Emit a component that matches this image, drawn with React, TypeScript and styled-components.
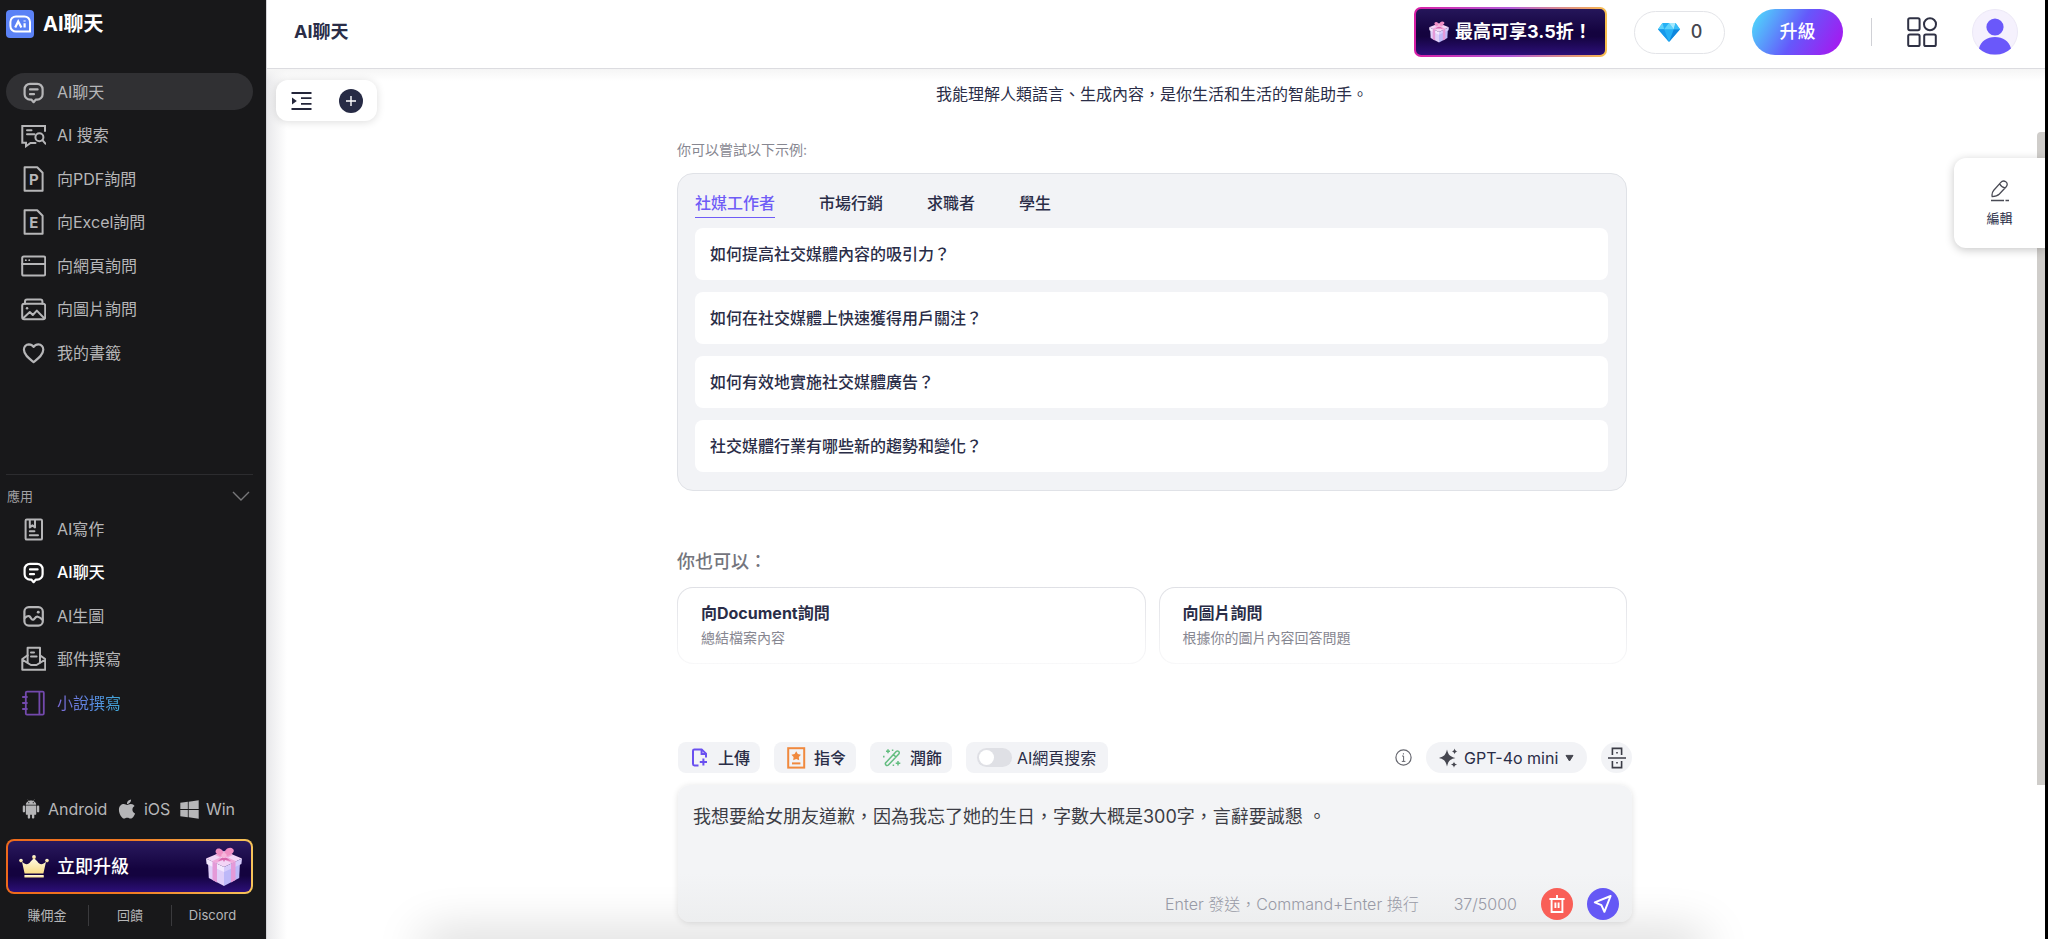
import React, { useState } from "react";
import styled, { createGlobalStyle, css } from "styled-components";
import { AiFillAndroid } from "react-icons/ai";
import { FaApple, FaWindows } from "react-icons/fa";

const GlobalStyle = createGlobalStyle`
  * { box-sizing: border-box; }
  body {
    margin: 0;
    background: #fff;
    color: #2a2d47;
    font-family: Inter, "Noto Sans CJK TC", sans-serif;
    font-size: 16px;
    line-height: 24px;
  }
  button, input, select, textarea { font: inherit; color: inherit; }
  button { border: 0; padding: 0; background: none; cursor: pointer; }
  a { color: inherit; text-decoration: none; }
  h1, h2, p, ul { margin: 0; padding: 0; list-style: none; }
  svg { display: block; flex: none; }
`;

/* ---------- shell ---------- */

const Shell = styled.div`
  display: grid;
  grid-template-columns: 266px minmax(0, 1fr);
  min-height: 100vh;
  border-right: 3px solid #000;
`;

const Sidebar = styled.aside`
  display: flex;
  flex-direction: column;
  padding: 10px 13px 13px 6px;
  background: #18181a;
  color: #b6b6b8;
`;

const Main = styled.main`
  position: relative;
  display: flex;
  flex-direction: column;
  border-left: 1px solid #d4d4d8;
`;

/* ---------- sidebar ---------- */

const Brand = styled.a`
  display: flex;
  align-items: center;
  gap: 9px;
  height: 28px;
  color: #fff;
  font-size: 20px;
  font-weight: 700;
`;

const NavList = styled.ul<{ $height: number }>`
  display: flex;
  flex-direction: column;
  justify-content: space-between;
  height: ${(p) => p.$height}px;
`;

const PrimaryNav = styled.nav`
  margin-top: 35px;
`;

const NavLink = styled.a<{ $active?: boolean; $bright?: boolean }>`
  display: flex;
  align-items: center;
  gap: 11px;
  height: 37px;
  padding-left: 14px;
  border-radius: 19px;
  ${(p) => p.$active && css`background: #303033;`}
  ${(p) => p.$bright && css`color: #fff; font-weight: 500;`}
`;

const GradientLabel = styled.span`
  background: linear-gradient(90deg, #7d6bd8, #5b86e0 50%, #3fa9d8);
  background-clip: text;
  color: transparent;
`;

const AppsNav = styled.nav`
  margin-top: 103px;
  border-top: 1px solid #2c2c2f;
`;

const AppsToggle = styled.button`
  display: flex;
  align-items: center;
  justify-content: space-between;
  width: 100%;
  height: 20px;
  margin: 11px 0 4px;
  padding: 0 3px 0 1px;
  color: #a2a2a5;
  font-size: 13px;
`;

const SidebarFooter = styled.div`
  margin-top: auto;
`;

const Platforms = styled.div`
  display: flex;
  justify-content: space-between;
  padding: 0 18px 0 14px;
`;

const PlatformLink = styled.a`
  display: flex;
  align-items: center;
  gap: 6px;
`;

const UpgradeBanner = styled.button`
  display: flex;
  align-items: center;
  gap: 8px;
  width: 100%;
  height: 55px;
  margin: 18px 0 11px;
  padding: 0 7px 0 11px;
  border: 2px solid transparent;
  border-radius: 8px;
  background:
    linear-gradient(180deg, #2a1a5e, #14033f 55%, #14033f 68%, #2c0f78) padding-box,
    linear-gradient(90deg, #ee6a1c, #f07a22 50%, #f6c45a) border-box;
  color: #fff;
  font-size: 18px;
  font-weight: 500;
  & > svg:last-child { margin-left: auto; }
`;

const FooterLinks = styled.div`
  display: grid;
  grid-template-columns: 82px 83px 1fr;
  font-size: 13px;
  line-height: 21px;
  text-align: center;
  a + a { border-left: 1px solid #3a3a3d; }
`;

/* ---------- header ---------- */

const Header = styled.header`
  display: flex;
  align-items: center;
  justify-content: space-between;
  height: 69px;
  padding: 0 27px 4px;
  border-bottom: 1px solid #dcdce0;
`;

const PageTitle = styled.h1`
  font-size: 18px;
  line-height: 26px;
  font-weight: 700;
`;

const HeaderActions = styled.div`
  display: flex;
  align-items: center;
  font-size: 18px;
  font-weight: 500;
`;

const PromoButton = styled.button`
  display: flex;
  align-items: center;
  gap: 5px;
  width: 193px;
  height: 50px;
  padding: 0 0 0 12px;
  border: 2px solid transparent;
  border-radius: 7px;
  background:
    linear-gradient(180deg, #25165a, #14033f 50%, #14033f 60%, #2c0f78) padding-box,
    linear-gradient(90deg, #d81ea4, #b45ad8 50%, #f0a860 92%, #f8c04c) border-box;
  color: #fff;
  font-weight: 700;
  white-space: nowrap;
`;

const GemPill = styled.button`
  display: flex;
  align-items: center;
  justify-content: center;
  gap: 10px;
  width: 91px;
  height: 43px;
  margin-left: 27px;
  border: 1px solid #e3e4e8;
  border-radius: 22px;
  color: #45474f;
  font-weight: 500;
`;

const UpgradePill = styled.button`
  width: 91px;
  height: 46px;
  margin-left: 27px;
  border-radius: 23px;
  background: linear-gradient(120deg, #4fd6fb 5%, #6558fb 50%, #a31bf0 92%);
  color: #fff;
  font-weight: 500;
`;

const Separator = styled.span`
  width: 1px;
  height: 28px;
  margin: 0 35px 0 28px;
  background: #d0d1d6;
`;

const AvatarButton = styled.button`
  margin-left: 35px;
`;

/* ---------- floating pieces ---------- */

const FloatingTools = styled.div`
  position: absolute;
  top: 80px;
  left: 9px;
  display: flex;
  align-items: center;
  justify-content: space-between;
  width: 101px;
  height: 41px;
  padding: 0 14px 0 15px;
  border-radius: 12px;
  background: #fff;
  box-shadow: 0 1px 8px rgba(0, 0, 0, 0.14);
`;

const ScrollThumb = styled.span`
  position: absolute;
  top: 132px;
  right: 0;
  width: 8px;
  height: 653px;
  border-radius: 4px 0 0 0;
  background: #cfcdca;
`;

const EditTab = styled.button`
  position: absolute;
  top: 158px;
  right: 0;
  display: flex;
  flex-direction: column;
  align-items: center;
  justify-content: center;
  gap: 6px;
  width: 91px;
  height: 90px;
  padding-top: 2px;
  border-radius: 12px 0 0 12px;
  background: #fff;
  box-shadow: 0 2px 10px rgba(0, 0, 0, 0.22);
  font-size: 13px;
  line-height: 20px;
`;

/* ---------- content ---------- */

const Content = styled.div`
  display: flex;
  flex: 1;
  flex-direction: column;
  padding: 13px 8px 0 0;
  background:
    linear-gradient(180deg, #f5f5f5, rgba(245, 245, 245, 0) 12px),
    linear-gradient(90deg, #e9e9eb, rgba(255, 255, 255, 0) 20px),
    #fff;
`;

const Column = styled.section`
  width: 100%;
  max-width: 950px;
  margin: 0 auto;
`;

const Intro = styled.p`
  text-align: center;
`;

const Caption = styled.p`
  margin: 33px 0 12px;
  color: #878791;
  font-size: 14px;
  line-height: 22px;
`;

const ExamplePanel = styled.div`
  display: flex;
  flex-direction: column;
  padding: 16px 18px 18px 17px;
  border: 1px solid #e0e2e7;
  border-radius: 16px;
  background: #f2f3f6;
  font-weight: 500;
`;

const Tabs = styled.div`
  display: flex;
  gap: 44px;
  height: 28px;
  margin-bottom: 10px;
`;

const Tab = styled.button<{ $selected: boolean }>`
  padding-bottom: 2px;
  border-bottom: 1px solid ${(p) => (p.$selected ? "#6f5cf6" : "transparent")};
  color: ${(p) => (p.$selected ? "#6f5cf6" : "inherit")};
`;

const Questions = styled.ul`
  display: grid;
  gap: 12px;
`;

const QuestionButton = styled.button`
  width: 100%;
  height: 52px;
  padding: 0 15px;
  border-radius: 8px;
  background: #fff;
  text-align: left;
`;

const SubHeading = styled.h2`
  margin: 58px 0 12px;
  color: #74757d;
  font-size: 18px;
  line-height: 26px;
  font-weight: 500;
`;

const Options = styled.div`
  display: grid;
  grid-template-columns: 1fr 1fr;
  gap: 13px;
`;

const OptionCard = styled.a`
  display: block;
  height: 77px;
  padding: 13px 23px;
  border-radius: 16px;
  border: 1px solid transparent;
  background:
    linear-gradient(#fff, #fff) padding-box,
    linear-gradient(180deg, #dfe0e5, #f8f8f9) border-box;
  strong { display: block; font-weight: 700; }
  span { display: block; margin-top: 2px; color: #878791; font-size: 14px; line-height: 22px; }
`;

/* ---------- composer ---------- */

const Dock = styled.footer`
  position: relative;
  overflow: hidden;
  flex: 1;
  display: flex;
  flex-direction: column;
  justify-content: flex-end;
  padding: 48px 0 17px 6px;
  &::after {
    content: "";
    position: absolute;
    bottom: -20px;
    left: 9%;
    right: 19%;
    height: 20px;
    border-radius: 20px;
    box-shadow: 0 0 48px 6px rgba(0, 0, 0, 0.18);
  }
`;

const Composer = styled.form`
  position: relative;
  z-index: 1;
  width: 100%;
  max-width: 954px;
  margin: 0 auto;
`;

const Toolbar = styled.div`
  display: flex;
  align-items: center;
  gap: 14px;
  margin-bottom: 12px;
`;

const chip = css`
  display: flex;
  align-items: center;
  height: 31px;
  border-radius: 8px;
  background: #f2f3f6;
`;

const ToolButton = styled.button`
  ${chip}
  gap: 6px;
  width: 82px;
  padding-left: 10px;
  font-weight: 500;
`;

const SwitchLabel = styled.label`
  ${chip}
  gap: 5px;
  padding: 0 12px 0 11px;
`;

const Switch = styled.input`
  appearance: none;
  display: flex;
  width: 35px;
  height: 19px;
  margin: 0;
  padding: 2px;
  border-radius: 10px;
  background: #dfe0e5;
  &::before {
    content: "";
    width: 15px;
    height: 15px;
    border-radius: 50%;
    background: #fff;
  }
  &:checked { justify-content: flex-end; background: #6558fb; }
`;

const InfoButton = styled.button`
  margin-left: auto;
`;

const ModelPicker = styled.label`
  ${chip}
  gap: 6px;
  padding: 0 13px;
  border-radius: 16px;
  select { border: 0; padding: 0; background: none; appearance: none; outline: 0; }
`;

const RoundChip = styled.button`
  ${chip}
  justify-content: center;
  width: 31px;
  border-radius: 50%;
`;

const InputPanel = styled.div`
  display: flex;
  flex-direction: column;
  height: 137px;
  border-radius: 12px;
  background: linear-gradient(180deg, #f3f4f6 65%, #edeeef);
  box-shadow: 0 1px 6px rgba(0, 0, 0, 0.12);
`;

const MessageInput = styled.textarea`
  flex: 1;
  width: 100%;
  padding: 18px 15px 0;
  border: 0;
  outline: 0;
  resize: none;
  background: none;
  color: #3c3d45;
  font-size: 18px;
  line-height: 28px;
`;

const InputFooter = styled.div`
  display: flex;
  align-items: center;
  justify-content: flex-end;
  padding: 0 13px 2px 0;
  color: #989aa6;
  font-weight: 300;
`;

const Counter = styled.span`
  margin: 0 24px 0 35px;
`;

const ActionButton = styled.button<{ $color: string }>`
  display: grid;
  place-items: center;
  width: 32px;
  height: 32px;
  border-radius: 50%;
  background: ${(p) => p.$color};
  & + & { margin-left: 14px; }
`;

/* ---------- icons ---------- */

const Glyph = ({ children, width = 2 }: { children: React.ReactNode; width?: number }) => (
  <svg width="26" height="26" viewBox="0 0 26 26" fill="none" stroke="currentColor" strokeWidth={width} strokeLinejoin="round" strokeLinecap="round" aria-hidden="true">
    {children}
  </svg>
);

const ChatIcon = () => (
  <Glyph width={2.2}>
    <path d="M10 4.8h7.2a5.4 5.4 0 0 1 5.4 5.4v5a5.4 5.4 0 0 1-5.4 5.4h-1.3l-2.3 2.6-2.3-2.6H10a5.4 5.4 0 0 1-5.4-5.4v-5A5.4 5.4 0 0 1 10 4.8z" />
    <path d="M10 10.4h7.6M10 15.2h4" />
  </Glyph>
);
const SearchIcon = () => (
  <Glyph>
    <path d="M25 9V4H2.3v16.8H6v3.4l4.5-3.2h5" strokeLinejoin="miter" />
    <path d="M7 8.2h4.5M7 12.2h7.5" />
    <circle cx="19.4" cy="15.2" r="4" />
    <path d="m22.4 18.2 3 3.4" />
  </Glyph>
);
const LetterDocIcon = ({ letter }: { letter: string }) => (
  <Glyph>
    <path d="M4.6 1.2h12.6l5.4 5.6v18H4.6z" />
    <text x="13.8" y="19.2" textAnchor="middle" fontSize="15" fontWeight="700" fill="currentColor" stroke="none">{letter}</text>
  </Glyph>
);
const WebIcon = () => (
  <Glyph>
    <rect x="2.2" y="3.4" width="23" height="19.2" rx="1.6" />
    <path d="M2.2 11h23" />
    <path d="M5.8 7.2h.1M9.2 7.2h.1" strokeWidth="1.8" />
  </Glyph>
);
const PicturesIcon = () => (
  <Glyph>
    <path d="M5 7.8V5.6a2 2 0 0 1 2-2h13.4a2 2 0 0 1 2 2v2.2" />
    <rect x="2.2" y="7.8" width="23" height="15.4" rx="2" />
    <path d="m3.4 22 6.4-6 3 3 4-4.4L24 22" />
    <path d="M7 12.2h.1" strokeWidth="2.4" />
  </Glyph>
);
const HeartIcon = () => (
  <Glyph width={2.2}>
    <path d="M8.8 4.4A5 5 0 0 0 3.9 9.6c0 5.4 5.4 9.2 9.7 12.5 4.3-3.3 9.7-7.1 9.7-12.5a5 5 0 0 0-4.9-5.2c-2 0-3.7.9-4.8 2.5-1.1-1.6-2.8-2.5-4.8-2.5z" />
  </Glyph>
);
const WritingIcon = () => (
  <Glyph>
    <rect x="5.6" y="3.6" width="16.4" height="20" rx="1.2" />
    <path d="M9.8 4v7.4l2.600-2 2.6 2V4M9.800 15.200h4.600M9.800 19.200h8.200" />
  </Glyph>
);
const PaintIcon = () => (
  <Glyph width={2.2}>
    <rect x="4.4" y="4.2" width="18.4" height="18.4" rx="4.4" />
    <path d="M4.8 15c3.6-3.4 5.2-1.8 6.2.2s2.6 2.2 4 0 3.600-2.200 7.400 1.400" />
    <path d="M18.2 9.200h.1" strokeWidth="2.8" />
  </Glyph>
);
const MailIcon = () => (
  <Glyph>
    <path d="M7.6 9.4 2.3 13v10.800h22.900V13L20 9.400M2.300 13.600l8.600 5.400h5.600l8.700-5.400" />
    <path d="M7.6 16.400V1.800H20v14.600M11 6.600h3M11 10.600h5.600" />
  </Glyph>
);
const NovelIcon = () => (
  <svg width="26" height="26" viewBox="0 0 26 26" fill="none" stroke="#7349ad" strokeWidth="1.8" aria-hidden="true">
    <rect x="5.8" y="1.6" width="18" height="23" rx="1.2" />
    <path d="M19.4 1.6v23M2.2 7h5.4M2.200 13h5.400M2.200 19h5.400" />
  </svg>
);
const LogoIcon = () => (
  <svg width="28" height="28" viewBox="0 0 28 28" fill="none" aria-hidden="true">
    <rect width="28" height="28" rx="4" fill="#5b82f6" />
    <path d="M10 6.400h8.400a5.600 5.600 0 0 1 5.600 5.600v9.600H10A5.600 5.600 0 0 1 4.400 16v-4A5.600 5.600 0 0 1 10 6.400z" stroke="#fff" strokeWidth="2" />
    <path d="m9.200 17.400 3-6 3.200 6M18.600 13.200v4.200M18.600 10.600v.8" stroke="#fff" strokeWidth="2.2" />
  </svg>
);
const CrownIcon = () => (
  <svg width="30" height="24" viewBox="0 0 30 24" aria-hidden="true">
    <defs>
      <linearGradient id="crown" x1="0" y1="0" x2="0" y2="1">
        <stop offset="0" stopColor="#fffbe6" /><stop offset="1" stopColor="#f8dc86" />
      </linearGradient>
    </defs>
    <g fill="url(#crown)">
      <path d="M3 6.800c3.400 3.400 6.400 3.200 8.600-.2L15 3l3.400 3.600c2.200 3.400 5.200 3.600 8.600.2l-2.600 11.600H5.600z" />
      <rect x="5.4" y="20" width="19.4" height="2.6" rx=".6" />
      <circle cx="2" cy="5.6" r="1.8" /><circle cx="15" cy="2" r="1.9" /><circle cx="28" cy="5.6" r="1.8" />
    </g>
  </svg>
);
const GiftIcon = ({ size }: { size: number }) => (
  <svg width={size} height={size} viewBox="0 0 40 40" aria-hidden="true">
    <path d="M4 15 20 22v17L4.800 31z" fill="#e0cff9" />
    <path d="M36 15 20 22v17l15.200-8z" fill="#bdb8f8" />
    <path d="M2 11.500 20 4l18 7.500L20 20z" fill="#f3d5f6" />
    <path d="M2 11.500 20 20v5L2.600 17z" fill="#f3e8fe" />
    <path d="M38 11.500 20 20v5l17.400-8z" fill="#d6cbfb" />
    <path d="m8.500 14.500 4.500 2.200v18.800l-4.500-2.400zM31.500 14.500 27 16.700v18.800l4.500-2.400z" fill="#e49ad8" />
    <path d="m11 8 17 8.300 4-2L15 6.200zM29 8l-17 8.300-4-2 17-8.100z" fill="#f0a8da" />
    <path d="M20 10c-5-1-10-4-8-7s8-1 8 5c0-6 6-9 9-6s-3 7-9 8z" fill="#f08fc4" />
    <path d="m20 9-6 5 5-1 1 2 1-2 6 1z" fill="#d765ac" />
    <circle cx="20" cy="8.5" r="2.6" fill="#f8b4da" />
  </svg>
);
const GemIcon = () => (
  <svg width="24" height="20" viewBox="0 0 24 20" aria-hidden="true">
    <path d="M5.500 1h13L23 7.200 12 20 1 7.200z" fill="#25b0f5" />
    <path d="M5.500 1 1 7.200h6.200zM12 1 7.200 7.200h9.600z" fill="#5cd2fb" />
    <path d="M18.500 1H12l4.800 6.200z" fill="#a5e9fd" />
    <path d="M1 7.200h6.200L12 20z" fill="#1798ea" />
    <path d="M23 7.200h-6.200L12 20z" fill="#0f86dd" />
    <path d="m18.500 1 4.500 6.200h-6.200z" fill="#37bdf7" />
  </svg>
);
const GridIcon = () => (
  <svg width="30" height="30" viewBox="0 0 30 30" fill="none" stroke="#2f3144" strokeWidth="2" aria-hidden="true">
    <rect x="1.2" y="1.2" width="11.4" height="12" rx="1.6" />
    <circle cx="23" cy="7.2" r="6" />
    <rect x="1.2" y="17.4" width="11.4" height="11.6" rx="1.6" />
    <rect x="17.2" y="17.4" width="11.6" height="11.6" rx="1.6" />
  </svg>
);
const AvatarIcon = () => (
  <svg width="46" height="46" viewBox="0 0 46 46" aria-hidden="true">
    <circle cx="23" cy="23" r="22.5" fill="#f5f1fd" stroke="#ece8f6" />
    <circle cx="23" cy="18" r="8.6" fill="#6a58fa" />
    <path d="M7 39.500C9 32 15 28 23 28s14 4 16 11.500A22.500 22.500 0 0 1 23 45.500 22.500 22.500 0 0 1 7 39.500z" fill="#6a58fa" />
  </svg>
);
const IndentIcon = () => (
  <svg width="21" height="20" viewBox="0 0 21 20" fill="none" stroke="#24263a" strokeWidth="1.8" aria-hidden="true">
    <path d="M.5 2h20M10 7.200h10.500M10 12.800h10.500M.5 18h20" />
    <path d="M1 6.600 5.800 10 1 13.400z" fill="#24263a" stroke="none" />
  </svg>
);
const PlusIcon = () => (
  <svg width="24" height="24" viewBox="0 0 24 24" aria-hidden="true">
    <circle cx="12" cy="12" r="12" fill="#272b45" />
    <path d="M12 7v10M7 12h10" stroke="#fff" strokeWidth="1.4" />
  </svg>
);
const PencilIcon = () => (
  <svg width="20" height="22" viewBox="0 0 20 22" fill="none" stroke="#4a4b55" strokeWidth="1.3" strokeLinejoin="round" aria-hidden="true">
    <path d="M2.200 16.600c-.6-2.600.2-4.600 1.600-6.400l6.800-7.600c1.400-1.600 3.400-2 5.200-.8s1.800 3.400.4 5L9.400 14c-1.800 1.800-4.200 2.600-7.200 2.600zM9.600 3.800c1.200 2.400 2.800 3.600 5.400 4.200" />
    <path d="M1 20.600h13M15.500 20.600h3.500" strokeWidth="1.5" />
  </svg>
);
const ChevronIcon = () => (
  <svg width="18" height="10" viewBox="0 0 18 10" fill="none" stroke="#77777a" strokeWidth="1.4" aria-hidden="true">
    <path d="m1 1 8 8 8-8" />
  </svg>
);
const UploadIcon = () => (
  <svg width="24" height="22" viewBox="0 0 24 22" fill="none" stroke="#6a50f0" strokeWidth="2" aria-hidden="true">
    <path d="M10.500 18.400H6.400a1.400 1.400 0 0 1-1.400-1.400V3.800a1.400 1.400 0 0 1 1.400-1.400h7.200l4.400 4.200v4" />
    <path d="M13.600 2.600V7H18M15.400 11.400v7.200M11.800 15h7.200" />
  </svg>
);
const CommandIcon = () => (
  <svg width="24" height="22" viewBox="0 0 24 22" fill="none" stroke="#f0893e" strokeWidth="2" aria-hidden="true">
    <rect x="4.2" y="1.2" width="16" height="19.4" />
    <path d="m12.200 4.200 1.600 2.900 3.200.6-2.200 2.400.4 3.200-3-1.400-3 1.400.4-3.200-2.200-2.400 3.200-.6z" fill="#f0893e" stroke="none" />
    <path d="M8 16.400h8.400" />
  </svg>
);
const PolishIcon = () => (
  <svg width="24" height="22" viewBox="0 0 24 22" fill="none" stroke="#63bd80" strokeWidth="1.5" strokeLinejoin="round" aria-hidden="true">
    <path d="M6 15.400 16.200 4.600a1.700 1.700 0 0 1 2.600 2.400L8.400 18a1.700 1.700 0 0 1-2.400-2.600zM13.400 7.600l2.600 2.400" />
    <path d="M8 2.200v4M6 4.200h4M18 14v4.600M15.700 16.300h4.600M3.800 8.800v1.600M12.600 2.600v1.400M13.400 17.600v1.400" />
  </svg>
);
const InfoIcon = () => (
  <svg width="17" height="17" viewBox="0 0 17 17" fill="none" stroke="#66676f" strokeWidth="1.2" aria-hidden="true">
    <circle cx="8.5" cy="8.5" r="7.6" />
    <path d="M7 7h1.600v5.400M6.800 12.400h3.600M8.400 4.200v1.300" strokeWidth="1" />
  </svg>
);
const SparkleIcon = () => (
  <svg width="19" height="20" viewBox="0 0 19 20" fill="#45464f" aria-hidden="true">
    <path d="M8 1.600c1.200 5.200 3 7.200 8.400 8.400-5.400 1.200-7.200 3.200-8.400 8.400C6.800 13.200 5 11.200-.2 10 5 8.800 6.800 6.800 8 1.600z" />
    <path d="M15.600.6c.4 1.700 1 2.400 2.800 2.800-1.800.4-2.400 1.100-2.800 2.800-.4-1.700-1-2.400-2.800-2.800 1.800-.4 2.400-1.100 2.800-2.800zM15 13.400c.4 2 1.200 2.800 3.200 3.200-2 .4-2.800 1.200-3.200 3.200-.4-2-1.200-2.800-3.200-3.200 2-.4 2.800-1.200 3.200-3.200z" />
  </svg>
);
const CaretIcon = () => (
  <svg width="9" height="8" viewBox="0 0 9 8" fill="#45464f" aria-hidden="true">
    <path d="M1 1.400h7L4.500 7z" stroke="#45464f" strokeLinejoin="round" />
  </svg>
);
const SplitIcon = () => (
  <svg width="18" height="22" viewBox="0 0 18 22" fill="none" stroke="#3b3c46" strokeWidth="1.6" aria-hidden="true">
    <path d="M0 11h18M4.400 8V1.400h9.200V8M4.400 14v6.600h9.200V14M9 5v1.600M9 15v1.600" />
  </svg>
);
const TrashIcon = () => (
  <svg width="18" height="20" viewBox="0 0 18 20" fill="none" stroke="#fff" strokeWidth="1.9" aria-hidden="true">
    <path d="M1.400 5h15.200M3.600 5v13h10.800V5M7.400 8.600v5.400M10.600 8.600v5.400M9 1v3.600" />
  </svg>
);
const SendIcon = () => (
  <svg width="20" height="20" viewBox="0 0 20 20" fill="none" stroke="#fff" strokeWidth="2" strokeLinejoin="round" aria-hidden="true">
    <path d="M17.600 2 1.800 8.400l6.600 2.800 3 6.600z" />
  </svg>
);

/* ---------- data ---------- */

const primary = [
  { label: "AI聊天", icon: <ChatIcon />, active: true },
  { label: "AI 搜索", icon: <SearchIcon /> },
  { label: "向PDF詢問", icon: <LetterDocIcon letter="P" /> },
  { label: "向Excel詢問", icon: <LetterDocIcon letter="E" /> },
  { label: "向網頁詢問", icon: <WebIcon /> },
  { label: "向圖片詢問", icon: <PicturesIcon /> },
  { label: "我的書籤", icon: <HeartIcon /> },
];

const apps = [
  { label: "AI寫作", icon: <WritingIcon /> },
  { label: "AI聊天", icon: <ChatIcon />, bright: true },
  { label: "AI生圖", icon: <PaintIcon /> },
  { label: "郵件撰寫", icon: <MailIcon /> },
  { label: "小說撰寫", icon: <NovelIcon />, gradient: true },
];

const tabs = ["社媒工作者", "市場行銷", "求職者", "學生"];

const questions = [
  "如何提高社交媒體內容的吸引力？",
  "如何在社交媒體上快速獲得用戶關注？",
  "如何有效地實施社交媒體廣告？",
  "社交媒體行業有哪些新的趨勢和變化？",
];

const options = [
  { title: "向Document詢問", text: "總結檔案內容" },
  { title: "向圖片詢問", text: "根據你的圖片內容回答問題" },
];

export default function App() {
  const [tab, setTab] = useState(tabs[0]);

  return (
    <>
      <GlobalStyle />
      <Shell>
        <Sidebar>
          <Brand href="#"><LogoIcon />AI聊天</Brand>
          <PrimaryNav>
            <NavList $height={298}>
              {primary.map((item) => (
                <li key={item.label}>
                  <NavLink href="#" $active={item.active}>{item.icon}{item.label}</NavLink>
                </li>
              ))}
            </NavList>
          </PrimaryNav>
          <AppsNav>
            <AppsToggle>應用<ChevronIcon /></AppsToggle>
            <NavList $height={211}>
              {apps.map((item) => (
                <li key={item.label}>
                  <NavLink href="#" $bright={item.bright}>
                    {item.icon}
                    {item.gradient ? <GradientLabel>{item.label}</GradientLabel> : item.label}
                  </NavLink>
                </li>
              ))}
            </NavList>
          </AppsNav>
          <SidebarFooter>
            <Platforms>
              <PlatformLink href="#"><AiFillAndroid size={22} />Android</PlatformLink>
              <PlatformLink href="#"><FaApple size={22} />iOS</PlatformLink>
              <PlatformLink href="#"><FaWindows size={21} />Win</PlatformLink>
            </Platforms>
            <UpgradeBanner><CrownIcon />立即升級<GiftIcon size={40} /></UpgradeBanner>
            <FooterLinks>
              <a href="#">賺佣金</a>
              <a href="#">回饋</a>
              <a href="#">Discord</a>
            </FooterLinks>
          </SidebarFooter>
        </Sidebar>

        <Main>
          <Header>
            <PageTitle>AI聊天</PageTitle>
            <HeaderActions>
              <PromoButton><GiftIcon size={22} />最高可享3.5折！</PromoButton>
              <GemPill><GemIcon />0</GemPill>
              <UpgradePill>升級</UpgradePill>
              <Separator />
              <button aria-label="應用"><GridIcon /></button>
              <AvatarButton aria-label="帳號"><AvatarIcon /></AvatarButton>
            </HeaderActions>
          </Header>

          <Content>
            <Column>
              <Intro>我能理解人類語言、生成內容，是你生活和生活的智能助手。</Intro>
              <Caption>你可以嘗試以下示例:</Caption>
              <ExamplePanel>
                <Tabs role="tablist">
                  {tabs.map((name) => (
                    <Tab key={name} role="tab" aria-selected={name === tab} $selected={name === tab} onClick={() => setTab(name)}>
                      {name}
                    </Tab>
                  ))}
                </Tabs>
                <Questions>
                  {questions.map((q) => (
                    <li key={q}><QuestionButton>{q}</QuestionButton></li>
                  ))}
                </Questions>
              </ExamplePanel>
              <SubHeading>你也可以：</SubHeading>
              <Options>
                {options.map((o) => (
                  <OptionCard key={o.title} href="#">
                    <strong>{o.title}</strong>
                    <span>{o.text}</span>
                  </OptionCard>
                ))}
              </Options>
            </Column>

            <Dock>
              <Composer onSubmit={(e) => e.preventDefault()}>
                <Toolbar>
                  <ToolButton type="button"><UploadIcon />上傳</ToolButton>
                  <ToolButton type="button"><CommandIcon />指令</ToolButton>
                  <ToolButton type="button"><PolishIcon />潤飾</ToolButton>
                  <SwitchLabel><Switch type="checkbox" role="switch" />AI網頁搜索</SwitchLabel>
                  <InfoButton type="button" aria-label="說明"><InfoIcon /></InfoButton>
                  <ModelPicker>
                    <SparkleIcon />
                    <select aria-label="模型" defaultValue="GPT-4o mini"><option>GPT-4o mini</option></select>
                    <CaretIcon />
                  </ModelPicker>
                  <RoundChip type="button" aria-label="清除上下文"><SplitIcon /></RoundChip>
                </Toolbar>
                <InputPanel>
                  <MessageInput aria-label="訊息" defaultValue="我想要給女朋友道歉，因為我忘了她的生日，字數大概是300字，言辭要誠懇 。" />
                  <InputFooter>
                    <span>Enter 發送，Command+Enter 換行</span>
                    <Counter>37/5000</Counter>
                    <ActionButton type="button" $color="#f95f57" aria-label="刪除"><TrashIcon /></ActionButton>
                    <ActionButton type="submit" $color="#6558f5" aria-label="發送"><SendIcon /></ActionButton>
                  </InputFooter>
                </InputPanel>
              </Composer>
            </Dock>
          </Content>

          <FloatingTools>
            <button aria-label="展開列表"><IndentIcon /></button>
            <button aria-label="新對話"><PlusIcon /></button>
          </FloatingTools>
          <ScrollThumb />
          <EditTab><PencilIcon />編輯</EditTab>
        </Main>
      </Shell>
    </>
  );
}
